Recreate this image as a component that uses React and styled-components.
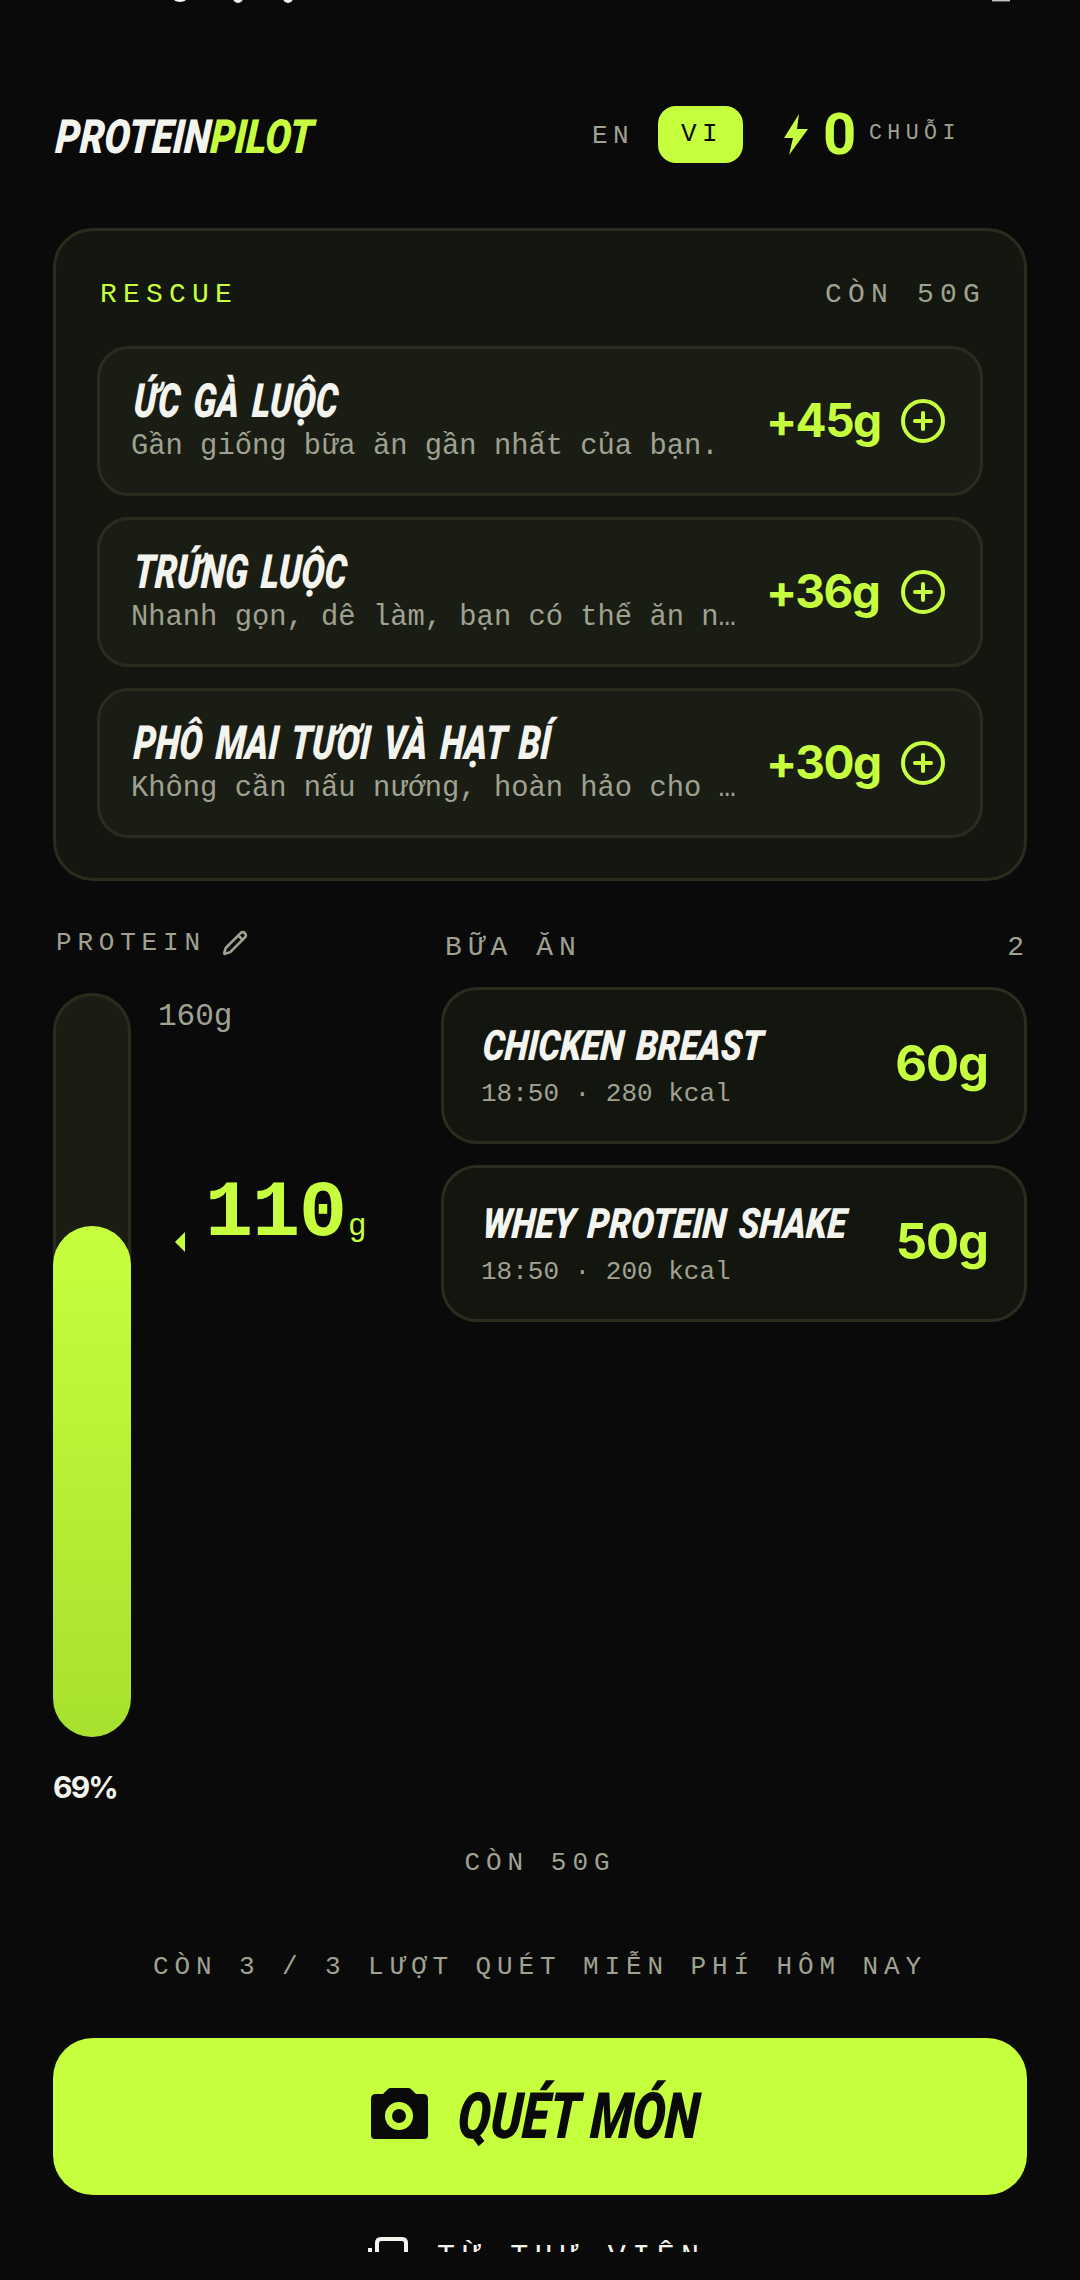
import React from 'react';
import styled, { createGlobalStyle } from 'styled-components';
import { CirclePlus, Pencil } from 'lucide-react';

const Global = createGlobalStyle`
  html, body { margin: 0; padding: 0; background: #0a0a0a; }
  * { box-sizing: border-box; }
`;
const lime = '#c6ff3d';
const ink = '#f4f4ee';
const muted = '#a0a291';
const edge = '#2a2d1e';
const mono = '"Liberation Mono", monospace';
const numeric = 'Inter, "Liberation Sans", sans-serif';
const display = 'Roboto, "Liberation Sans", sans-serif';

const Page = styled.div`
  position: relative; width: 1080px; height: 2252px; overflow: hidden; background: #0a0a0a;
  padding: 0 53px; display: flex; flex-direction: column; font-family: ${mono};
  & > * { flex: none; }
`;
const StatusClip = styled.svg`
  display: block; width: 1080px; height: 3px; margin-left: -53px;
`;
const Header = styled.header`
  display: flex; align-items: center; height: 60px; margin-top: 101px;
`;
const Squeezed = styled.span`
  display: inline-block; font-family: ${display}; font-weight: 900; font-style: italic; white-space: nowrap;
  font-size: ${p => p.$size}px; line-height: 1; color: ${p => p.$color || ink}; word-spacing: ${p => p.$ws || 0}px;
  transform: scaleX(${p => p.$sx}) skewX(-5deg); transform-origin: left center;
`;
const Logo = styled.div`
  width: 532px; padding: 4px 0 0 3px; display: flex;
`;
const LogoPart = styled(Squeezed)`
  width: ${p => p.$w}px;
`;
const LangOff = styled.span`
  font-size: 26px; letter-spacing: 5.5px; color: ${muted}; width: 73px; padding: 4px 0 0 7px;
`;
const LangOn = styled.span`
  width: 85px; height: 57px; border-radius: 18px; background: ${lime}; color: #0a0a0a; font-size: 26px;
  letter-spacing: 5.5px; display: flex; align-items: center; justify-content: center; padding-left: 3px;
`;
const Bolt = styled.svg`
  width: 24px; height: 41px; margin-left: 41px; flex: none;
`;
const Streak = styled.span`
  font: 700 58px/1 Roboto, sans-serif; color: ${lime}; margin-left: 15px; width: 46px;
`;
const StreakLabel = styled.span`
  font-size: 21.6px; letter-spacing: 5.4px; color: ${muted}; margin-top: -3px;
`;
const RescueCard = styled.section`
  margin-top: 64px; height: 653px; border: 3px solid ${edge}; border-radius: 40px; background: #14170f;
  padding: 45px 41px 0; display: flex; flex-direction: column;
`;
const LabelRow = styled.div`
  display: flex; justify-content: space-between; align-items: center; height: 38px; margin: 0 -3px 32px 0; padding-left: 3px;
`;
const Label = styled.span`
  font-size: ${p => p.$size || 28}px; line-height: 1; letter-spacing: ${p => p.$ls ?? 6.2}px; color: ${p => p.$color || muted}; white-space: nowrap;
`;
const RowList = styled.div`
  display: flex; flex-direction: column; gap: 21px;
`;
const RescueRow = styled.div`
  height: 150px; border: 3px solid ${edge}; border-radius: 32px; background: #1a1d14;
  display: flex; align-items: center; padding: 0 33px 0 32px;
`;
const RowText = styled.div`
  width: 610px; flex: none; display: flex; flex-direction: column; margin-top: -2px;
`;
const RowName = styled(Squeezed)`
  margin-left: 2px;
`;
const RowSub = styled.div`
  font-size: 28.8px; line-height: 32px; color: ${muted}; white-space: nowrap; overflow: hidden; text-overflow: ellipsis;
  width: 607px; margin: 7px 0 0 -1px;
`;
const Gain = styled.span`
  font: 700 46px/1 ${numeric}; letter-spacing: -1.6px; color: ${lime}; margin: -2px 15px 0 24px; width: 118px; white-space: nowrap;
`;
const Columns = styled.div`
  display: flex; gap: 0; margin-top: 50px;
`;
const ProteinCol = styled.div`
  width: 388px; flex: none; display: flex; flex-direction: column;
`;
const ProteinLabel = styled.div`
  height: 24px; display: flex; align-items: center; padding-left: 3px; color: ${muted}; gap: 16px;
`;
const GaugeRow = styled.div`
  display: flex; margin-top: 38px;
`;
const Track = styled.div`
  position: relative; width: 78px; height: 744px; border: 3px solid ${edge}; border-radius: 39px; background: #1a1d14; flex: none;
`;
const Fill = styled.div`
  position: absolute; left: -3px; right: -3px; bottom: -3px; border-radius: 39px;
  background: linear-gradient(to bottom, ${lime}, #a8e02f);
`;
const GaugeSide = styled.div`
  position: relative; flex: 1; padding-left: 27px;
`;
const Goal = styled.div`
  font-size: 31px; line-height: 1; margin-top: 8px; color: ${muted};
`;
const Current = styled.div`
  position: absolute; left: 74px; top: 181px; display: flex; align-items: baseline; color: ${lime}; font-weight: 700;
  font-size: 80px; line-height: 1; letter-spacing: -1px;
`;
const Unit = styled.span`
  font-size: 31px; font-weight: 400; margin-left: 2px; letter-spacing: 0;
`;
const Pointer = styled.span`
  position: absolute; left: 44px; top: 239px; width: 0; height: 0;
  border-style: solid; border-width: 10px 10px 10px 0; border-color: transparent ${lime} transparent transparent;
`;
const Percent = styled.div`
  font: 700 30px/1 ${numeric}; letter-spacing: -1.8px; color: ${ink}; margin-top: 35px;
`;
const MealsCol = styled.div`
  flex: 1; min-width: 0; display: flex; flex-direction: column; margin-top: 2px;
`;
const MealHead = styled.div`
  display: flex; justify-content: space-between; align-items: center; height: 30px; padding: 0 3px 0 4px; margin-bottom: 24px;
`;
const MealCard = styled.div`
  height: 157px; border: 3px solid ${edge}; border-radius: 36px; background: #13160f;
  display: flex; align-items: center; padding: 0 36px 0 38px; margin-bottom: 21px;
`;
const MealText = styled.div`
  flex: 1; min-width: 0; display: flex; flex-direction: column; gap: 12px; padding-top: 2px;
`;
const MealName = styled(Squeezed)`
  margin-left: 1px;
`;
const MealMeta = styled.div`
  font-size: 26px; line-height: 30px; color: ${muted}; white-space: nowrap; margin-left: -1px;
`;
const MealGrams = styled.span`
  flex: none; font: 700 49px/1 ${numeric}; letter-spacing: -1px; color: ${lime}; margin-top: -4px;
`;
const Centered = styled.div`
  text-align: center; margin-top: ${p => p.$top}px; font-size: 26px; line-height: 30px; letter-spacing: ${p => p.$ls}px; color: ${muted}; white-space: nowrap;
`;
const ScanButton = styled.button`
  height: 157px; margin-top: 56px; border: 0; border-radius: 40px; background: ${lime};
  display: flex; align-items: center; justify-content: flex-start; padding: 0 0 0 318px; color: #0a0a0a;
`;
const CameraIcon = styled.svg`
  width: 57px; height: 51px; flex: none; margin-top: -6px;
`;
const ScanLabel = styled(Squeezed)`
  margin-left: 30px;
`;
const LibraryRow = styled.div`
  display: flex; align-items: center; margin-top: 42px; padding-left: 315px; color: ${ink}; height: 40px;
`;
const LibraryIcon = styled.svg`
  width: 40px; height: 40px; flex: none; margin-right: 29px;
`;

const rescue = [
  ['ỨC GÀ LUỘC', 'Gần giống bữa ăn gần nhất của bạn.', '+45g'],
  ['TRỨNG LUỘC', 'Nhanh gọn, dễ làm, bạn có thể ăn ngay bây giờ.', '+36g'],
  ['PHÔ MAI TƯƠI VÀ HẠT BÍ', 'Không cần nấu nướng, hoàn hảo cho bữa phụ.', '+30g'],
];
const meals = [
  ['CHICKEN BREAST', '18:50 · 280 kcal', '60g'],
  ['WHEY PROTEIN SHAKE', '18:50 · 200 kcal', '50g'],
];

export default function App() {
  return (
    <Page>
      <Global />
      <StatusClip viewBox="0 0 1080 3">
        <ellipse cx="180" cy="-4" rx="8" ry="6" fill={ink} />
        <circle cx="238" cy="-2" r="5" fill={ink} />
        <circle cx="288" cy="-2" r="5" fill={ink} />
        <rect x="992" y="0" width="18" height="1.4" fill={ink} opacity="0.8" />
      </StatusClip>
      <Header>
        <Logo>
          <LogoPart $size={47} $sx={0.82} $w={155}>PROTEIN</LogoPart>
          <LogoPart $size={47} $sx={0.82} $color={lime} $w={104}>PILOT</LogoPart>
        </Logo>
        <LangOff>EN</LangOff>
        <LangOn>VI</LangOn>
        <Bolt viewBox="0 0 24 41"><path d="M15 0 L0 24 L9 24 L5 41 L24 15 L13 15 Z" fill={lime} /></Bolt>
        <Streak>0</Streak>
        <StreakLabel>CHUỖI</StreakLabel>
      </Header>
      <RescueCard>
        <LabelRow>
          <Label $color={lime}>RESCUE</Label>
          <Label>CÒN 50G</Label>
        </LabelRow>
        <RowList>
          {rescue.map(([name, sub, gain]) => (
            <RescueRow key={name}>
              <RowText>
                <RowName $size={47} $sx={0.74} $ws={6}>{name}</RowName>
                <RowSub>{sub}</RowSub>
              </RowText>
              <Gain>{gain}</Gain>
              <CirclePlus size={48} strokeWidth={2} color={lime} style={{ flex: 'none' }} />
            </RescueRow>
          ))}
        </RowList>
      </RescueCard>
      <Columns>
        <ProteinCol>
          <ProteinLabel>
            <Label $size={26} $ls={5.8}>PROTEIN</Label>
            <Pencil size={26} strokeWidth={2.4} />
          </ProteinLabel>
          <GaugeRow>
            <Track><Fill style={{ height: `${(110 / 160) * 744}px` }} /></Track>
            <GaugeSide>
              <Goal>160g</Goal>
              <Pointer />
              <Current>110<Unit>g</Unit></Current>
            </GaugeSide>
          </GaugeRow>
          <Percent>69%</Percent>
        </ProteinCol>
        <MealsCol>
          <MealHead>
            <Label $ls={6}>BỮA ĂN</Label>
            <Label $ls={0}>2</Label>
          </MealHead>
          {meals.map(([name, meta, grams]) => (
            <MealCard key={name}>
              <MealText>
                <MealName $size={42} $sx={0.82} $ws={5}>{name}</MealName>
                <MealMeta>{meta}</MealMeta>
              </MealText>
              <MealGrams>{grams}</MealGrams>
            </MealCard>
          ))}
        </MealsCol>
      </Columns>
      <Centered $top={46} $ls={6}>CÒN 50G</Centered>
      <Centered $top={74} $ls={5.9}>CÒN 3 / 3 LƯỢT QUÉT MIỄN PHÍ HÔM NAY</Centered>
      <ScanButton>
        <CameraIcon viewBox="0 0 57 51">
          <path d="M20 0 H37 Q39 0 40 1 L45 6 H52 Q57 6 57 11 V47 Q57 51 53 51 H4 Q0 51 0 47 V11 Q0 6 5 6 H12 L17 1 Q18 0 20 0 Z" fill="#0a0a0a" />
          <circle cx="28" cy="28" r="10.5" fill="none" stroke={lime} strokeWidth="7" />
        </CameraIcon>
        <ScanLabel $size={64} $sx={0.77} $color="#0a0a0a">QUÉT MÓN</ScanLabel>
      </ScanButton>
      <LibraryRow>
        <LibraryIcon viewBox="0 0 40 40"><path d="M9 40 V6 Q9 2 13 2 H34 Q38 2 38 6 V40 M2 11 V40" fill="none" stroke={ink} strokeWidth="4" /></LibraryIcon>
        <Label $size={30} $ls={6.4} $color={ink}>TỪ THƯ VIỆN</Label>
      </LibraryRow>
    </Page>
  );
}
